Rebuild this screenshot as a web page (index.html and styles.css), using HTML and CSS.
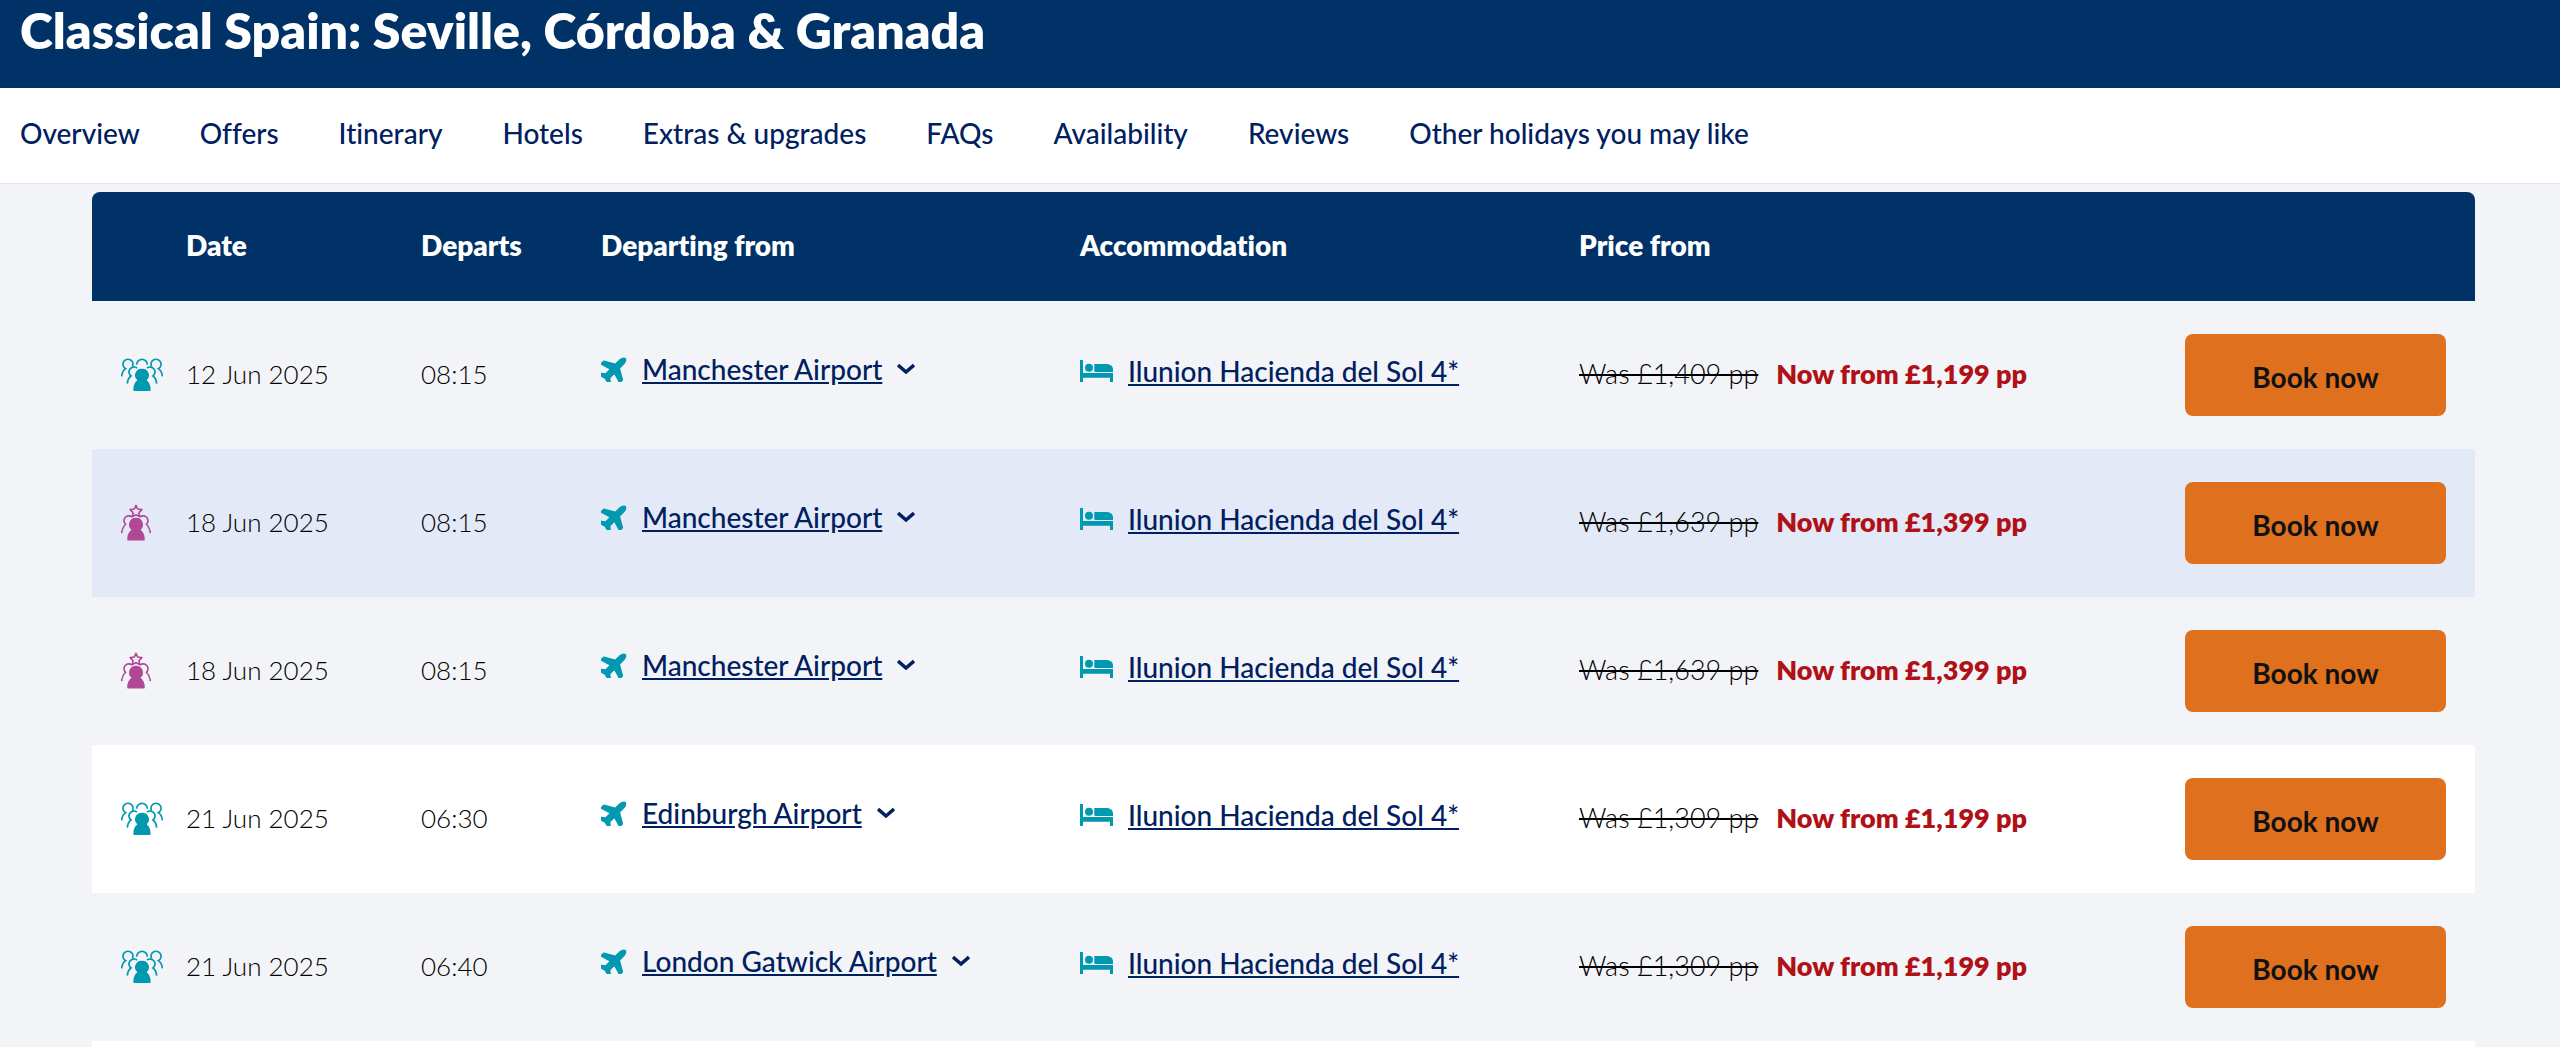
FILE: index.html
```html
<!DOCTYPE html>
<html lang="en">
<head>
  <meta charset="UTF-8">
  <meta name="viewport" content="width=device-width, initial-scale=1.0">
  <title>Classical Spain: Seville, Córdoba &amp; Granada</title>
  <link rel="stylesheet" href="styles.css">
</head>
<body>
  <!-- Icons -->
  <svg class="sprite" aria-hidden="true">
    <symbol id="icon-group" viewBox="0 0 126 99">
      <g fill="none" stroke="currentColor" stroke-width="5">
        <path d="M2 55C3 44 6 37 14 32A15 15 0 1 1 34 26"/>
        <path d="M124 55C123 44 120 37 112 32A15 15 0 1 0 92 26"/>
        <path d="M47 20A16 16 0 0 1 79 20"/>
        <path d="M19 77C20 65 23 59 30 54A15 15 0 1 1 48 30"/>
        <path d="M107 77C106 65 103 59 96 54A15 15 0 1 0 78 30"/>
      </g>
      <path fill="currentColor" d="M63 32a20 20 0 0 1 14 35c8 6 12 16 12 29q0 3-3 3H40q-3 0-3-3c0-13 4-23 12-29a20 20 0 0 1 14-35z"/>
    </symbol>
    <symbol id="icon-vip" viewBox="0 0 92 111">
      <g fill="none" stroke="currentColor" stroke-width="5">
        <path stroke-linejoin="round" d="M46 3l5 11 13 2-9 9 2 12-11-5-11 5 2-12-9-9 13-2z"/>
        <path d="M2 88C3 75 7 68 14 61A14 14 0 1 1 34 39"/>
        <path d="M90 88C89 75 85 68 78 61A14 14 0 1 0 58 39"/>
      </g>
      <path fill="currentColor" d="M46 41a21 21 0 0 1 14 37c8 6 13 16 13 30q0 3-3 3H22q-3 0-3-3c0-14 5-24 13-30a21 21 0 0 1 14-37z"/>
    </symbol>
    <symbol id="icon-plane" viewBox="36 16 480 480">
      <path fill="currentColor" transform="rotate(-45 288 256)" d="M480 192H365.7L260.6 8a16 16 0 0 0-13.900-8h-65.500c-10.600 0-18.300 10.200-15.400 20.400L214.900 192H112l-43.200-57.600a16 16 0 0 0-12.800-6.400H16c-10.400 0-18 9.800-15.500 19.900L32 256 .5 364.100C-2 374.200 5.600 384 16 384h40c5 0 9.800-2.400 12.800-6.400L112 320h102.900l-49.100 171.600c-2.900 10.200 4.800 20.400 15.400 20.400h65.500c5.700 0 11-3.100 13.900-8.100L365.700 320H480c35.300 0 96-28.700 96-64s-60.700-64-96-64z"/>
    </symbol>
    <symbol id="icon-bed" viewBox="0 0 99 66">
      <path fill="currentColor" d="M0 0h9v39h90v27h-9V53H9v13H0z"/>
      <circle fill="currentColor" cx="27" cy="23" r="12"/>
      <path fill="currentColor" d="M43 12h36c12 0 20 7 20 16v8H46q-3 0-3-3z"/>
    </symbol>
    <symbol id="icon-chevron" viewBox="0 0 18 12">
      <path fill="none" stroke="currentColor" stroke-width="3.5" d="M1 2l8 7 8-7"/>
    </symbol>
  </svg>

  <header class="page-header">
    <h1>Classical Spain: Seville, Córdoba &amp; Granada</h1>
  </header>

  <nav class="page-nav">
    <a href="#overview">Overview</a>
    <a href="#offers">Offers</a>
    <a href="#itinerary">Itinerary</a>
    <a href="#hotels">Hotels</a>
    <a href="#extras">Extras &amp; upgrades</a>
    <a href="#faqs">FAQs</a>
    <a href="#availability">Availability</a>
    <a href="#reviews">Reviews</a>
    <a href="#other">Other holidays you may like</a>
  </nav>

  <main class="availability" id="availability">
    <table class="departures">
      <colgroup>
        <col class="col-icon">
        <col class="col-date">
        <col class="col-time">
        <col class="col-airport">
        <col class="col-hotel">
        <col>
        <col class="col-book">
      </colgroup>
      <thead>
        <tr>
          <th></th>
          <th scope="col">Date</th>
          <th scope="col">Departs</th>
          <th scope="col">Departing from</th>
          <th scope="col">Accommodation</th>
          <th scope="col">Price from</th>
          <th></th>
        </tr>
      </thead>
      <tbody>
        <tr>
          <td class="type"><svg class="icon-group"><use href="#icon-group"/></svg></td>
          <td>12 Jun 2025</td>
          <td>08:15</td>
          <td><div class="airport"><svg class="icon-plane"><use href="#icon-plane"/></svg><button class="link">Manchester Airport</button><svg class="icon-chevron"><use href="#icon-chevron"/></svg></div></td>
          <td><div class="hotel"><svg class="icon-bed"><use href="#icon-bed"/></svg><a class="link" href="#hotels">Ilunion Hacienda del Sol 4*</a></div></td>
          <td><div class="price"><s>Was £1,409 pp</s><strong>Now from £1,199 pp</strong></div></td>
          <td class="book"><button class="book-btn">Book now</button></td>
        </tr>
        <tr class="highlight">
          <td class="type"><svg class="icon-vip"><use href="#icon-vip"/></svg></td>
          <td>18 Jun 2025</td>
          <td>08:15</td>
          <td><div class="airport"><svg class="icon-plane"><use href="#icon-plane"/></svg><button class="link">Manchester Airport</button><svg class="icon-chevron"><use href="#icon-chevron"/></svg></div></td>
          <td><div class="hotel"><svg class="icon-bed"><use href="#icon-bed"/></svg><a class="link" href="#hotels">Ilunion Hacienda del Sol 4*</a></div></td>
          <td><div class="price"><s>Was £1,639 pp</s><strong>Now from £1,399 pp</strong></div></td>
          <td class="book"><button class="book-btn">Book now</button></td>
        </tr>
        <tr>
          <td class="type"><svg class="icon-vip"><use href="#icon-vip"/></svg></td>
          <td>18 Jun 2025</td>
          <td>08:15</td>
          <td><div class="airport"><svg class="icon-plane"><use href="#icon-plane"/></svg><button class="link">Manchester Airport</button><svg class="icon-chevron"><use href="#icon-chevron"/></svg></div></td>
          <td><div class="hotel"><svg class="icon-bed"><use href="#icon-bed"/></svg><a class="link" href="#hotels">Ilunion Hacienda del Sol 4*</a></div></td>
          <td><div class="price"><s>Was £1,639 pp</s><strong>Now from £1,399 pp</strong></div></td>
          <td class="book"><button class="book-btn">Book now</button></td>
        </tr>
        <tr class="plain">
          <td class="type"><svg class="icon-group"><use href="#icon-group"/></svg></td>
          <td>21 Jun 2025</td>
          <td>06:30</td>
          <td><div class="airport"><svg class="icon-plane"><use href="#icon-plane"/></svg><button class="link">Edinburgh Airport</button><svg class="icon-chevron"><use href="#icon-chevron"/></svg></div></td>
          <td><div class="hotel"><svg class="icon-bed"><use href="#icon-bed"/></svg><a class="link" href="#hotels">Ilunion Hacienda del Sol 4*</a></div></td>
          <td><div class="price"><s>Was £1,309 pp</s><strong>Now from £1,199 pp</strong></div></td>
          <td class="book"><button class="book-btn">Book now</button></td>
        </tr>
        <tr>
          <td class="type"><svg class="icon-group"><use href="#icon-group"/></svg></td>
          <td>21 Jun 2025</td>
          <td>06:40</td>
          <td><div class="airport"><svg class="icon-plane"><use href="#icon-plane"/></svg><button class="link">London Gatwick Airport</button><svg class="icon-chevron"><use href="#icon-chevron"/></svg></div></td>
          <td><div class="hotel"><svg class="icon-bed"><use href="#icon-bed"/></svg><a class="link" href="#hotels">Ilunion Hacienda del Sol 4*</a></div></td>
          <td><div class="price"><s>Was £1,309 pp</s><strong>Now from £1,199 pp</strong></div></td>
          <td class="book"><button class="book-btn">Book now</button></td>
        </tr>
        <tr class="plain">
          <td colspan="7"></td>
        </tr>
      </tbody>
    </table>
  </main>
</body>
</html>
```
FILE: styles.css
```css
:root {
  --navy: #003268;
  --link: #00205f;
  --teal: #0099b0;
  --purple: #b14896;
  --orange: #df701e;
  --red: #b01116;
  --bg: #f3f4f8;
}
* {
  box-sizing: border-box;
}
body {
  margin: 0;
  height: 100vh;
  display: flex;
  flex-direction: column;
  overflow: hidden;
  background: var(--bg);
  color: #000;
  font-family: Lato, "Open Sans", sans-serif;
  font-size: 28px;
  line-height: 32px;
  font-variant-ligatures: none;
}
.sprite {
  display: none;
}
.page-header {
  flex: none;
  padding: 0 20px 28px;
  background: var(--navy);
  color: #fff;
}
.page-header h1 {
  margin: 0;
  font-size: 50px;
  line-height: 60px;
  font-weight: 800;
}
.page-nav {
  flex: none;
  display: flex;
  gap: 60px;
  padding: 29px 20px 34px;
  background: #fff;
  border-bottom: 1px solid #e2e4e8;
}
.page-nav a {
  color: var(--link);
  font-weight: 500;
  text-decoration: none;
}
.availability {
  flex: 1;
  min-height: 0;
  overflow: hidden;
  padding: 8px 85px 0 92px;
}

/* Departures table */
.departures {
  width: 100%;
  table-layout: fixed;
  border-collapse: collapse;
}
.col-icon { width: 94px; }
.col-date { width: 235px; }
.col-time { width: 180px; }
.col-airport { width: 479px; }
.col-hotel { width: 499px; }
.col-book { width: 320px; }
.departures th {
  height: 109px;
  padding: 0 0 4px;
  background: var(--navy);
  color: #fff;
  font-weight: 800;
  text-align: left;
}
.departures th:first-child {
  border-top-left-radius: 8px;
}
.departures th:last-child {
  border-top-right-radius: 8px;
}
.departures td {
  height: 148px;
  padding: 0 0 2px;
  font-size: 26px;
  font-weight: 300;
}
.highlight {
  background: #e3e9f6;
}
.plain {
  background: #fff;
}
.departures svg {
  display: block;
  flex: none;
}
.departures .type {
  padding-left: 29px;
}
.icon-group {
  width: 42px;
  height: 33px;
  color: var(--teal);
}
.icon-vip {
  width: 30px;
  height: 37px;
  color: var(--purple);
}
.icon-plane {
  width: 26px;
  height: 26px;
  color: var(--teal);
}
.icon-bed {
  width: 33px;
  height: 22px;
  color: var(--teal);
}
.icon-chevron {
  width: 18px;
  height: 12px;
  color: var(--link);
}
.airport,
.hotel,
.price {
  display: flex;
  align-items: center;
}
.airport {
  gap: 15px;
  padding-bottom: 10px;
}
.hotel {
  gap: 15px;
  padding-bottom: 6px;
}
.price {
  gap: 18px;
  font-size: 27px;
}
.price strong {
  color: var(--red);
  font-weight: 800;
}
.link {
  padding: 0;
  border: 0;
  background: none;
  color: var(--link);
  font: inherit;
  font-size: 28px;
  font-weight: 500;
  text-decoration: underline;
  cursor: pointer;
}
.departures .book {
  padding: 0 29px 0 0;
}
.book-btn {
  display: block;
  width: 261px;
  height: 82px;
  margin-left: auto;
  padding: 4px 0 0;
  border: 0;
  border-radius: 8px;
  background: var(--orange);
  color: #111;
  font: inherit;
  font-size: 28px;
  font-weight: 700;
  cursor: pointer;
}
```
